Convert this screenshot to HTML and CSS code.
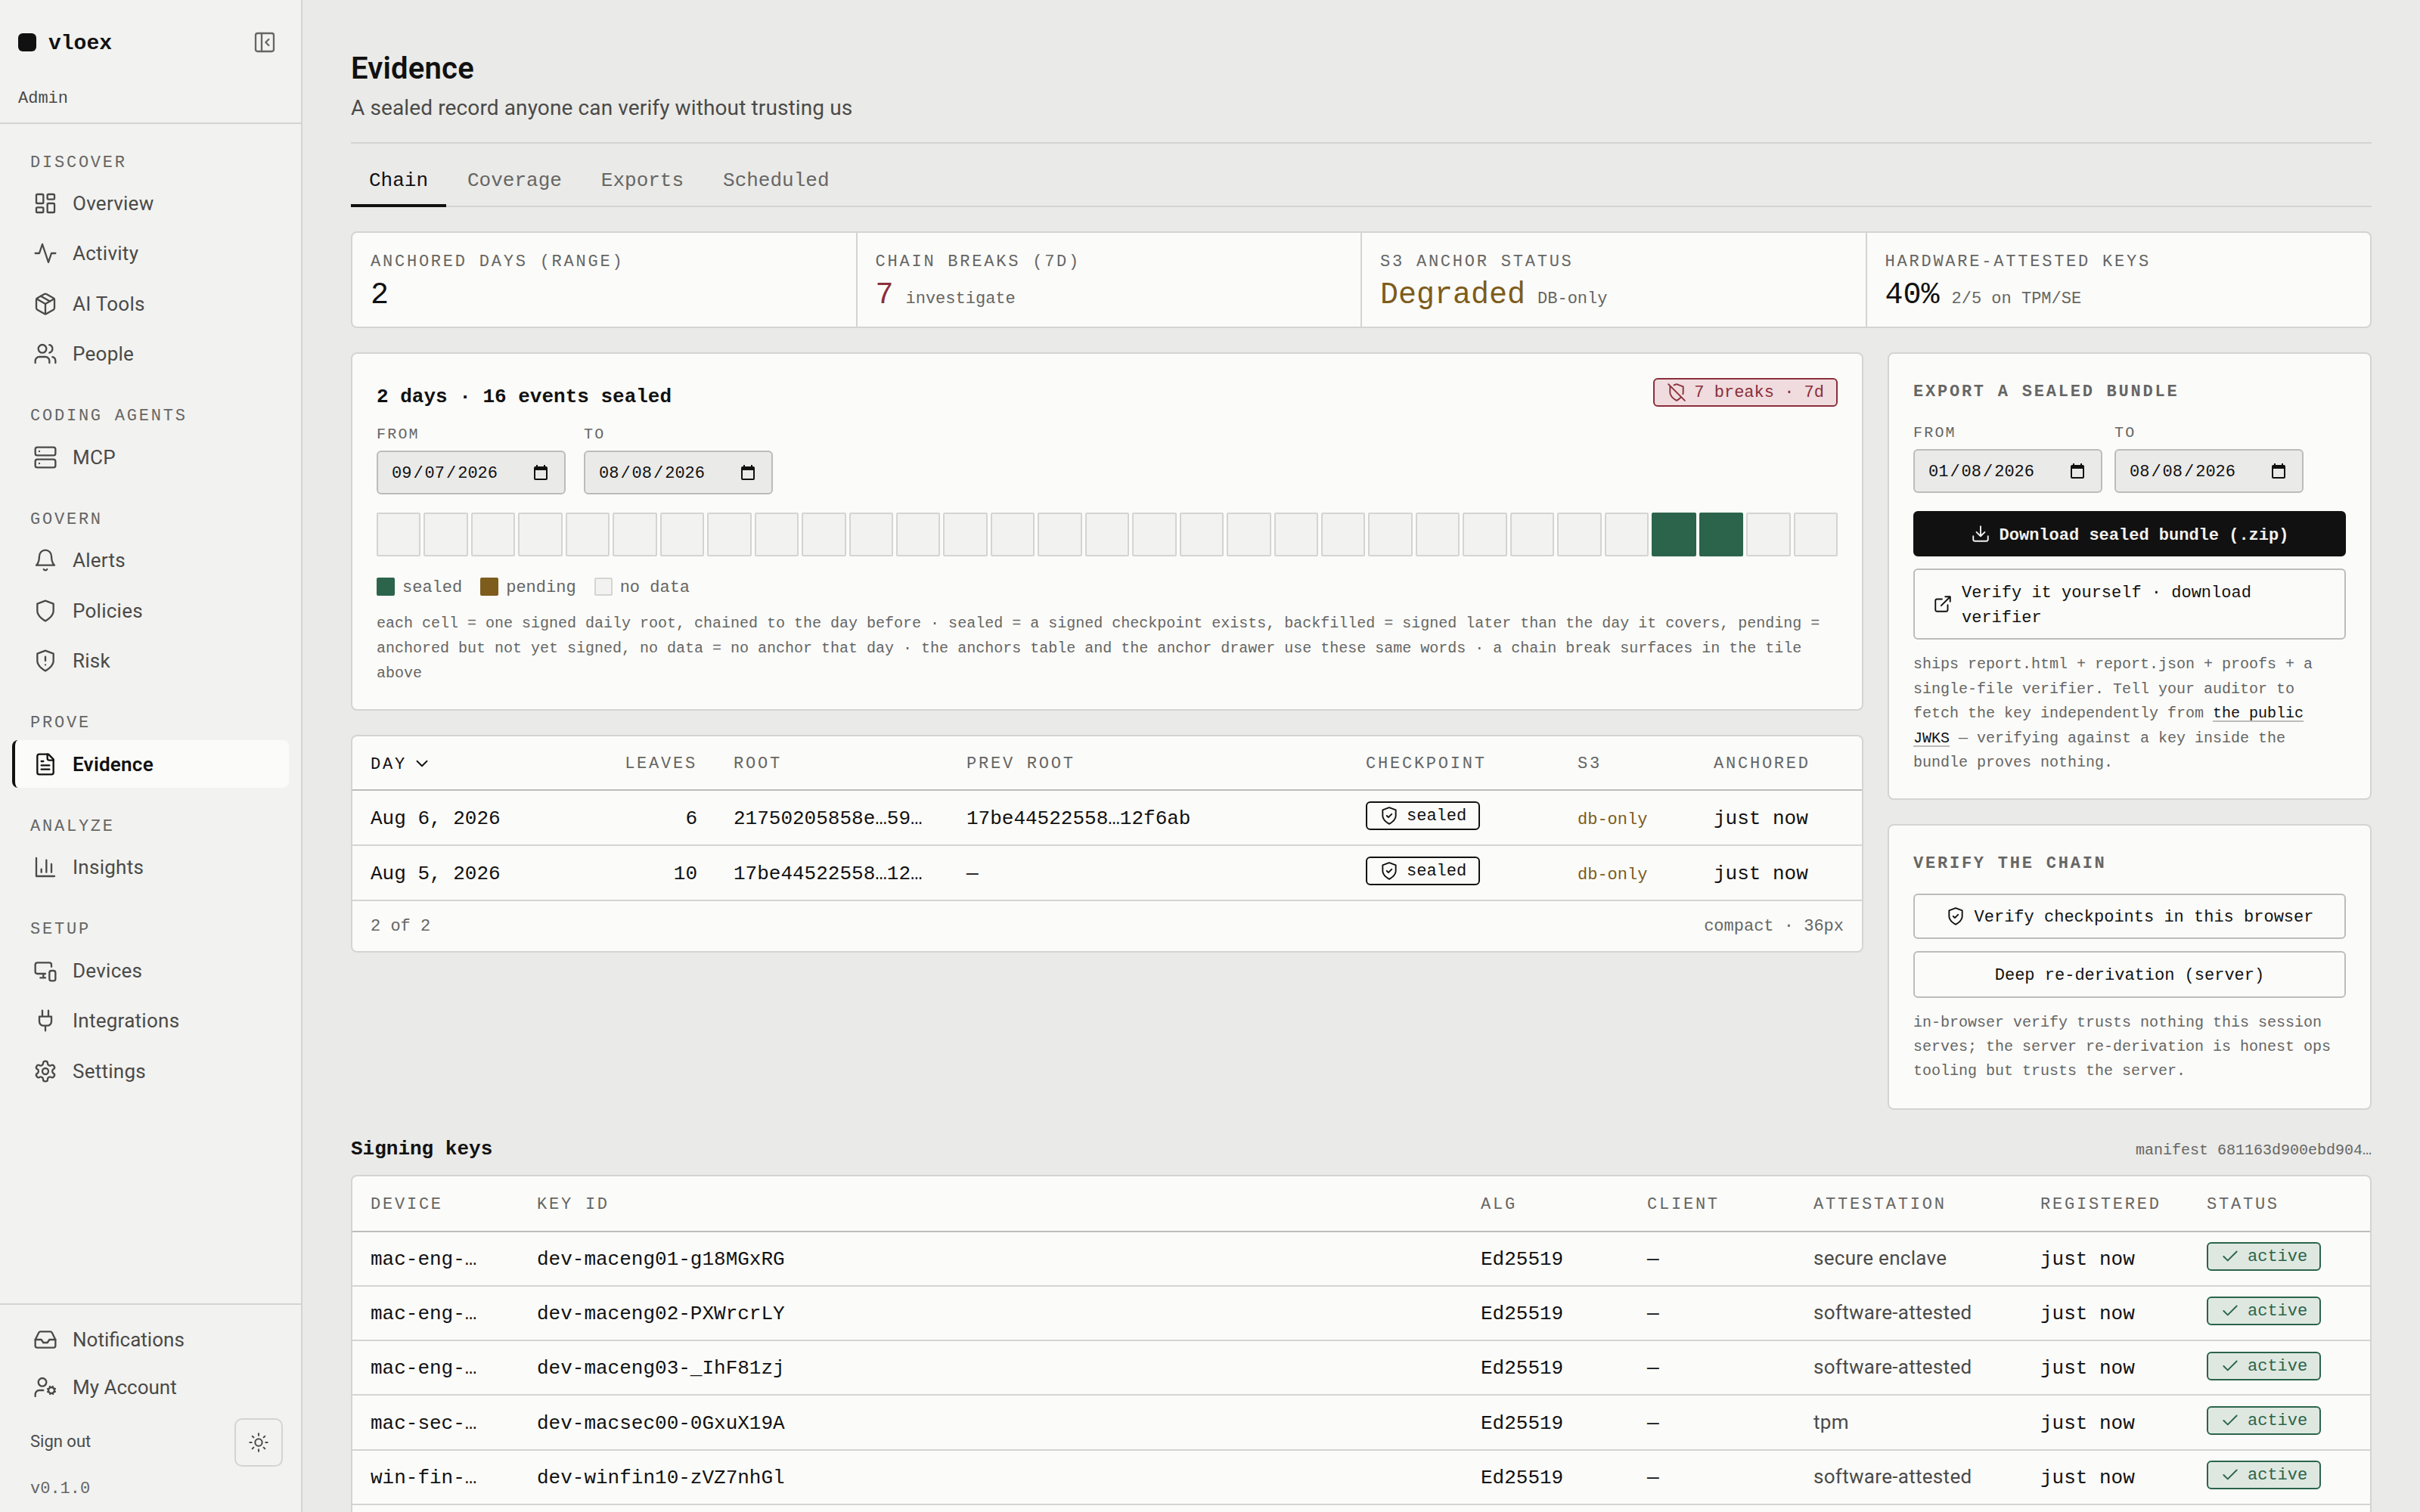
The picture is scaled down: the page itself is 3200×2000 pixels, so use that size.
FILE: index.html
```html
<!DOCTYPE html>
<html lang="en">
  <head>
    <meta charset="UTF-8" />
    <meta name="viewport" content="width=device-width, initial-scale=1.0" />
    <title>Evidence · vloex</title>
    <link rel="stylesheet" href="styles.css">
  </head>
  <body>
    <svg class="sprite" aria-hidden="true">
      <symbol id="i-panel" viewBox="0 0 24 24"><rect x="3" y="3" width="18" height="18" rx="2"/><path d="M9 3v18M16 15l-3-3 3-3"/></symbol>
      <symbol id="i-dashboard" viewBox="0 0 24 24"><rect x="3" y="3" width="7" height="9" rx="1"/><rect x="14" y="3" width="7" height="5" rx="1"/><rect x="14" y="12" width="7" height="9" rx="1"/><rect x="3" y="16" width="7" height="5" rx="1"/></symbol>
      <symbol id="i-activity" viewBox="0 0 24 24"><path d="M22 12h-4l-3 9L9 3l-3 9H2"/></symbol>
      <symbol id="i-package" viewBox="0 0 24 24"><path d="m7.5 4.27 9 5.15"/><path d="M21 8a2 2 0 0 0-1-1.73l-7-4a2 2 0 0 0-2 0l-7 4A2 2 0 0 0 3 8v8a2 2 0 0 0 1 1.73l7 4a2 2 0 0 0 2 0l7-4A2 2 0 0 0 21 16Z"/><path d="m3.3 7 8.7 5 8.7-5M12 22V12"/></symbol>
      <symbol id="i-users" viewBox="0 0 24 24"><path d="M16 21v-2a4 4 0 0 0-4-4H6a4 4 0 0 0-4 4v2"/><circle cx="9" cy="7" r="4"/><path d="M22 21v-2a4 4 0 0 0-3-3.87M16 3.13a4 4 0 0 1 0 7.75"/></symbol>
      <symbol id="i-server" viewBox="0 0 24 24"><rect x="2" y="2" width="20" height="8" rx="2"/><rect x="2" y="14" width="20" height="8" rx="2"/><path d="M6 6h.01M6 18h.01"/></symbol>
      <symbol id="i-bell" viewBox="0 0 24 24"><path d="M6 8a6 6 0 0 1 12 0c0 7 3 9 3 9H3s3-2 3-9M10.3 21a1.94 1.94 0 0 0 3.4 0"/></symbol>
      <symbol id="i-shield" viewBox="0 0 24 24"><path d="M12 22s8-4 8-10V5l-8-3-8 3v7c0 6 8 10 8 10"/></symbol>
      <symbol id="i-shield-alert" viewBox="0 0 24 24"><path d="M12 22s8-4 8-10V5l-8-3-8 3v7c0 6 8 10 8 10M12 8v4M12 16h.01"/></symbol>
      <symbol id="i-shield-check" viewBox="0 0 24 24"><path d="M12 22s8-4 8-10V5l-8-3-8 3v7c0 6 8 10 8 10M9 12l2 2 4-4"/></symbol>
      <symbol id="i-shield-off" viewBox="0 0 24 24"><path d="M19.69 14a6.9 6.9 0 0 0 .31-2V5l-8-3-3.16 1.18M4.73 4.73 4 5v7c0 6 8 10 8 10a20.29 20.29 0 0 0 5.62-4.38M2 2l20 20"/></symbol>
      <symbol id="i-file" viewBox="0 0 24 24"><path d="M15 2H6a2 2 0 0 0-2 2v16a2 2 0 0 0 2 2h12a2 2 0 0 0 2-2V7Z"/><path d="M14 2v4a2 2 0 0 0 2 2h4M10 9H8M16 13H8M16 17H8"/></symbol>
      <symbol id="i-chart" viewBox="0 0 24 24"><path d="M3 3v18h18M18 17V9M13 17V5M8 17v-3"/></symbol>
      <symbol id="i-devices" viewBox="0 0 24 24"><path d="M18 8V6a2 2 0 0 0-2-2H4a2 2 0 0 0-2 2v7a2 2 0 0 0 2 2h8M10 19v-3.96M7 19h5"/><rect x="16" y="12" width="6" height="10" rx="2"/></symbol>
      <symbol id="i-plug" viewBox="0 0 24 24"><path d="M12 22v-5M9 8V2M15 8V2M18 8v5a4 4 0 0 1-4 4h-4a4 4 0 0 1-4-4V8Z"/></symbol>
      <symbol id="i-settings" viewBox="0 0 24 24"><path d="M12.22 2h-.44a2 2 0 0 0-2 2v.18a2 2 0 0 1-1 1.73l-.43.25a2 2 0 0 1-2 0l-.15-.08a2 2 0 0 0-2.73.73l-.22.38a2 2 0 0 0 .73 2.73l.15.1a2 2 0 0 1 1 1.72v.51a2 2 0 0 1-1 1.74l-.15.09a2 2 0 0 0-.73 2.73l.22.38a2 2 0 0 0 2.73.73l.15-.08a2 2 0 0 1 2 0l.43.25a2 2 0 0 1 1 1.73V20a2 2 0 0 0 2 2h.44a2 2 0 0 0 2-2v-.18a2 2 0 0 1 1-1.73l.43-.25a2 2 0 0 1 2 0l.15.08a2 2 0 0 0 2.73-.73l.22-.39a2 2 0 0 0-.73-2.73l-.15-.08a2 2 0 0 1-1-1.74v-.5a2 2 0 0 1 1-1.74l.15-.09a2 2 0 0 0 .73-2.73l-.22-.38a2 2 0 0 0-2.73-.73l-.15.08a2 2 0 0 1-2 0l-.43-.25a2 2 0 0 1-1-1.73V4a2 2 0 0 0-2-2z"/><circle cx="12" cy="12" r="3"/></symbol>
      <symbol id="i-inbox" viewBox="0 0 24 24"><path d="M22 12h-6l-2 3h-4l-2-3H2"/><path d="M5.45 5.11 2 12v6a2 2 0 0 0 2 2h16a2 2 0 0 0 2-2v-6l-3.45-6.89A2 2 0 0 0 16.76 4H7.24a2 2 0 0 0-1.79 1.11z"/></symbol>
      <symbol id="i-user-cog" viewBox="0 0 24 24"><circle cx="18" cy="15" r="3"/><circle cx="9" cy="7" r="4"/><path d="M10 15H6a4 4 0 0 0-4 4v2M21.7 16.4l-.9-.3M15.2 13.9l-.9-.3M16.6 18.7l.3-.9M19.1 12.2l.3-.9M19.6 18.7l-.4-1M16.8 12.3l-.4-1M14.3 16.6l1-.4M20.7 13.8l1-.4"/></symbol>
      <symbol id="i-sun" viewBox="0 0 24 24"><circle cx="12" cy="12" r="4"/><path d="M12 2v2M12 20v2M4.93 4.93l1.41 1.41M17.66 17.66l1.41 1.41M2 12h2M20 12h2M6.34 17.66l-1.41 1.41M19.07 4.93l-1.41 1.41"/></symbol>
      <symbol id="i-download" viewBox="0 0 24 24"><path d="M21 15v4a2 2 0 0 1-2 2H5a2 2 0 0 1-2-2v-4M7 10l5 5 5-5M12 15V3"/></symbol>
      <symbol id="i-external" viewBox="0 0 24 24"><path d="M15 3h6v6M10 14 21 3M18 13v6a2 2 0 0 1-2 2H5a2 2 0 0 1-2-2V8a2 2 0 0 1 2-2h6"/></symbol>
      <symbol id="i-check" viewBox="0 0 24 24"><path d="M20 6 9 17l-5-5"/></symbol>
      <symbol id="i-chevron" viewBox="0 0 24 24"><path d="m6 9 6 6 6-6"/></symbol>
      <symbol id="i-calendar" viewBox="0 0 18 20"><path d="M3 0h2v2h8V0h2v2h1a2 2 0 0 1 2 2v14a2 2 0 0 1-2 2H2a2 2 0 0 1-2-2V4a2 2 0 0 1 2-2h1zM2 7v11h14V7z" fill="#111" fill-rule="evenodd" stroke="none"/></symbol>
    </svg>

    <div class="app">
      <aside class="sidebar">
        <div class="brand">
          <div class="brand-row">
            <span class="logo"></span>
            <span class="brand-name">vloex</span>
            <svg class="icon collapse"><use href="#i-panel"/></svg>
          </div>
          <div class="role">Admin</div>
        </div>

        <nav class="nav">
          <div class="nav-group">
            <h3 class="nav-title">DISCOVER</h3>
            <a class="nav-item"><svg class="icon"><use href="#i-dashboard"/></svg>Overview</a>
            <a class="nav-item"><svg class="icon"><use href="#i-activity"/></svg>Activity</a>
            <a class="nav-item"><svg class="icon"><use href="#i-package"/></svg>AI Tools</a>
            <a class="nav-item"><svg class="icon"><use href="#i-users"/></svg>People</a>
          </div>
          <div class="nav-group">
            <h3 class="nav-title">CODING AGENTS</h3>
            <a class="nav-item"><svg class="icon"><use href="#i-server"/></svg>MCP</a>
          </div>
          <div class="nav-group">
            <h3 class="nav-title">GOVERN</h3>
            <a class="nav-item"><svg class="icon"><use href="#i-bell"/></svg>Alerts</a>
            <a class="nav-item"><svg class="icon"><use href="#i-shield"/></svg>Policies</a>
            <a class="nav-item"><svg class="icon"><use href="#i-shield-alert"/></svg>Risk</a>
          </div>
          <div class="nav-group">
            <h3 class="nav-title">PROVE</h3>
            <a class="nav-item active"><svg class="icon"><use href="#i-file"/></svg>Evidence</a>
          </div>
          <div class="nav-group">
            <h3 class="nav-title">ANALYZE</h3>
            <a class="nav-item"><svg class="icon"><use href="#i-chart"/></svg>Insights</a>
          </div>
          <div class="nav-group">
            <h3 class="nav-title">SETUP</h3>
            <a class="nav-item"><svg class="icon"><use href="#i-devices"/></svg>Devices</a>
            <a class="nav-item"><svg class="icon"><use href="#i-plug"/></svg>Integrations</a>
            <a class="nav-item"><svg class="icon"><use href="#i-settings"/></svg>Settings</a>
          </div>
        </nav>

        <div class="side-footer">
          <a class="nav-item"><svg class="icon"><use href="#i-inbox"/></svg>Notifications</a>
          <a class="nav-item"><svg class="icon"><use href="#i-user-cog"/></svg>My Account</a>
          <div class="signout-row">
            <span class="signout">Sign out</span>
            <button class="theme-btn"><svg class="icon"><use href="#i-sun"/></svg></button>
          </div>
          <div class="version">v0.1.0</div>
        </div>
      </aside>

      <main class="main">
        <header class="page-head">
          <h1>Evidence</h1>
          <p>A sealed record anyone can verify without trusting us</p>
        </header>

        <div class="tabs">
          <a class="tab active">Chain</a>
          <a class="tab">Coverage</a>
          <a class="tab">Exports</a>
          <a class="tab">Scheduled</a>
        </div>

        <section class="stats">
          <div class="stat">
            <div class="stat-label">ANCHORED DAYS (RANGE)</div>
            <div class="stat-line"><span class="stat-value">2</span></div>
          </div>
          <div class="stat">
            <div class="stat-label">CHAIN BREAKS (7D)</div>
            <div class="stat-line"><span class="stat-value danger">7</span><span class="stat-note">investigate</span></div>
          </div>
          <div class="stat">
            <div class="stat-label">S3 ANCHOR STATUS</div>
            <div class="stat-line"><span class="stat-value warn">Degraded</span><span class="stat-note">DB-only</span></div>
          </div>
          <div class="stat">
            <div class="stat-label">HARDWARE-ATTESTED KEYS</div>
            <div class="stat-line"><span class="stat-value">40%</span><span class="stat-note">2/5 on TPM/SE</span></div>
          </div>
        </section>

        <div class="columns">
          <div class="col">
            <section class="card chain">
              <div class="chain-head">
                <h2>2 days · 16 events sealed</h2>
                <span class="badge badge-danger"><svg class="icon"><use href="#i-shield-off"/></svg><span>7 breaks · 7d</span></span>
              </div>
              <div class="dates">
                <div class="field">
                  <label>FROM</label>
                  <div class="date"><span>09</span>/<span>07</span>/<span>2026</span><svg class="cal"><use href="#i-calendar"/></svg></div>
                </div>
                <div class="field">
                  <label>TO</label>
                  <div class="date"><span>08</span>/<span>08</span>/<span>2026</span><svg class="cal"><use href="#i-calendar"/></svg></div>
                </div>
              </div>
              <div class="cells">
                <i></i><i></i><i></i><i></i><i></i><i></i><i></i><i></i><i></i>
                <i></i><i></i><i></i><i></i><i></i><i></i><i></i><i></i><i></i>
                <i></i><i></i><i></i><i></i><i></i><i></i><i></i><i></i><i></i>
                <i class="sealed"></i><i class="sealed"></i><i></i><i></i>
              </div>
              <div class="legend">
                <span class="key"><i class="swatch sealed"></i>sealed</span>
                <span class="key"><i class="swatch pending"></i>pending</span>
                <span class="key"><i class="swatch"></i>no data</span>
              </div>
              <p class="hint">each cell = one signed daily root, chained to the day before · sealed = a signed checkpoint exists, backfilled = signed later than the day it covers, pending = anchored but not yet signed, no data = no anchor that day · the anchors table and the anchor drawer use these same words · a chain break surfaces in the tile above</p>
            </section>

            <section class="card">
              <table class="anchors">
                <colgroup>
                  <col style="width: 300px"><col style="width: 180px"><col style="width: 308px"><col style="width: 528px"><col style="width: 280px"><col style="width: 180px"><col>
                </colgroup>
                <thead>
                  <tr>
                    <th class="sorted">DAY<svg class="icon"><use href="#i-chevron"/></svg></th>
                    <th class="num">LEAVES</th>
                    <th>ROOT</th>
                    <th>PREV ROOT</th>
                    <th>CHECKPOINT</th>
                    <th>S3</th>
                    <th>ANCHORED</th>
                  </tr>
                </thead>
                <tbody>
                  <tr>
                    <td>Aug 6, 2026</td>
                    <td class="num">6</td>
                    <td>21750205858e…59…</td>
                    <td>17be44522558…12f6ab</td>
                    <td><span class="badge"><svg class="icon"><use href="#i-shield-check"/></svg><span>sealed</span></span></td>
                    <td><span class="small warn">db-only</span></td>
                    <td>just now</td>
                  </tr>
                  <tr>
                    <td>Aug 5, 2026</td>
                    <td class="num">10</td>
                    <td>17be44522558…12…</td>
                    <td>—</td>
                    <td><span class="badge"><svg class="icon"><use href="#i-shield-check"/></svg><span>sealed</span></span></td>
                    <td><span class="small warn">db-only</span></td>
                    <td>just now</td>
                  </tr>
                </tbody>
              </table>
              <div class="table-foot"><span>2 of 2</span><span>compact · 36px</span></div>
            </section>
          </div>

          <div class="col">
            <section class="card panel export">
              <h2 class="panel-title">EXPORT A SEALED BUNDLE</h2>
              <div class="dates">
                <div class="field">
                  <label>FROM</label>
                  <div class="date"><span>01</span>/<span>08</span>/<span>2026</span><svg class="cal"><use href="#i-calendar"/></svg></div>
                </div>
                <div class="field">
                  <label>TO</label>
                  <div class="date"><span>08</span>/<span>08</span>/<span>2026</span><svg class="cal"><use href="#i-calendar"/></svg></div>
                </div>
              </div>
              <button class="btn primary"><svg class="icon"><use href="#i-download"/></svg><span>Download sealed bundle (.zip)</span></button>
              <button class="btn"><svg class="icon"><use href="#i-external"/></svg><span>Verify it yourself · download verifier</span></button>
              <p class="hint">ships report.html + report.json + proofs + a single-file verifier. Tell your auditor to fetch the key independently from <a>the public</a> <a>JWKS</a> — verifying against a key inside the bundle proves nothing.</p>
            </section>

            <section class="card panel verify">
              <h2 class="panel-title">VERIFY THE CHAIN</h2>
              <button class="btn"><svg class="icon"><use href="#i-shield-check"/></svg><span>Verify checkpoints in this browser</span></button>
              <button class="btn"><span>Deep re-derivation (server)</span></button>
              <p class="hint">in-browser verify trusts nothing this session serves; the server re-derivation is honest ops tooling but trusts the server.</p>
            </section>
          </div>
        </div>

        <div class="section-head">
          <h2>Signing keys</h2>
          <span>manifest 681163d900ebd904…</span>
        </div>

        <section class="card">
          <table class="keys">
            <colgroup>
              <col style="width: 220px"><col><col style="width: 220px"><col style="width: 220px"><col style="width: 300px"><col style="width: 220px"><col style="width: 240px">
            </colgroup>
            <thead>
              <tr>
                <th>DEVICE</th>
                <th>KEY ID</th>
                <th>ALG</th>
                <th>CLIENT</th>
                <th>ATTESTATION</th>
                <th>REGISTERED</th>
                <th>STATUS</th>
              </tr>
            </thead>
            <tbody>
              <tr>
                <td>mac-eng-…</td><td>dev-maceng01-g18MGxRG</td><td>Ed25519</td><td>—</td>
                <td class="sans">secure enclave</td><td>just now</td>
                <td><span class="badge badge-ok"><svg class="icon"><use href="#i-check"/></svg><span>active</span></span></td>
              </tr>
              <tr>
                <td>mac-eng-…</td><td>dev-maceng02-PXWrcrLY</td><td>Ed25519</td><td>—</td>
                <td class="sans">software-attested</td><td>just now</td>
                <td><span class="badge badge-ok"><svg class="icon"><use href="#i-check"/></svg><span>active</span></span></td>
              </tr>
              <tr>
                <td>mac-eng-…</td><td>dev-maceng03-_IhF81zj</td><td>Ed25519</td><td>—</td>
                <td class="sans">software-attested</td><td>just now</td>
                <td><span class="badge badge-ok"><svg class="icon"><use href="#i-check"/></svg><span>active</span></span></td>
              </tr>
              <tr>
                <td>mac-sec-…</td><td>dev-macsec00-0GxuX19A</td><td>Ed25519</td><td>—</td>
                <td class="sans">tpm</td><td>just now</td>
                <td><span class="badge badge-ok"><svg class="icon"><use href="#i-check"/></svg><span>active</span></span></td>
              </tr>
              <tr>
                <td>win-fin-…</td><td>dev-winfin10-zVZ7nhGl</td><td>Ed25519</td><td>—</td>
                <td class="sans">software-attested</td><td>just now</td>
                <td><span class="badge badge-ok"><svg class="icon"><use href="#i-check"/></svg><span>active</span></span></td>
              </tr>
            </tbody>
          </table>
          <div class="table-foot"></div>
        </section>
      </main>
    </div>
  </body>
</html>
```

FILE: styles.css
```css
:root {
  --bg: #eaeae8;
  --side: #f2f2f0;
  --card: #fbfbf9;
  --line: #d4d4d1;
  --line-strong: #bcbcba;
  --ink: #111111;
  --mid: #4a4a48;
  --muted: #666664;
  --green: #2b644b;
  --brown: #7d5c1c;
  --red: #8a2f3b;
  --caps: 0.126em;
  --mono: "Liberation Mono", monospace;
  --sans: Roboto, "Liberation Sans", sans-serif;
}
* {
  box-sizing: border-box;
}
body {
  margin: 0;
  background: var(--bg);
  color: var(--ink);
  font-family: var(--mono);
  font-size: 26px;
}
h1,
h2,
h3,
p {
  margin: 0;
}
button {
  font: inherit;
  color: inherit;
}
.sprite {
  display: none;
}
.icon {
  width: 26px;
  height: 26px;
  flex: none;
  fill: none;
  stroke: currentColor;
  stroke-width: 1.75;
  stroke-linecap: round;
  stroke-linejoin: round;
}
.app {
  display: flex;
  height: 2000px;
  overflow: hidden;
}

/* sidebar */
.sidebar {
  width: 400px;
  flex: none;
  display: flex;
  flex-direction: column;
  background: var(--side);
  border-right: 2px solid var(--line);
}
.brand {
  padding: 40px 24px 15px;
  border-bottom: 2px solid var(--line);
}
.brand-row {
  display: flex;
  align-items: center;
  gap: 16px;
  height: 32px;
}
.logo {
  width: 24px;
  height: 24px;
  border-radius: 6px;
  background: var(--ink);
}
.brand-name {
  flex: 1;
  padding-top: 4px;
  font-size: 28px;
  font-weight: 700;
  line-height: 32px;
}
.brand .collapse {
  width: 32px;
  height: 32px;
  margin-right: 8px;
  color: var(--muted);
}
.role {
  margin-top: 43px;
  font-size: 22px;
  line-height: 32px;
  color: var(--mid);
}
.nav {
  padding: 33.5px 16px 0;
}
.nav-group {
  display: flex;
  flex-direction: column;
  gap: 4.1px;
  margin-bottom: 34px;
}
.nav-title {
  padding-left: 24px;
  font-size: 22px;
  font-weight: 400;
  line-height: 36px;
  letter-spacing: var(--caps);
  color: var(--muted);
}
.nav-item {
  display: flex;
  align-items: center;
  gap: 20px;
  height: 62.4px;
  padding-left: 24px;
  border-left: 4px solid transparent;
  border-radius: 8px;
  font-family: var(--sans);
  font-size: 26px;
  letter-spacing: 0.01em;
  color: var(--mid);
}
.nav-item .icon {
  width: 32px;
  height: 32px;
}
.nav-item.active {
  border-left-color: var(--ink);
  background: var(--card);
  color: var(--ink);
  font-weight: 600;
}
.side-footer {
  margin-top: auto;
  padding: 15px 24px 14px 16px;
  border-top: 2px solid var(--line);
}
.side-footer .nav-item {
  letter-spacing: 0;
}
.signout-row {
  display: flex;
  align-items: center;
  justify-content: space-between;
  margin-top: 10px;
  padding-left: 24px;
}
.signout {
  padding-bottom: 3px;
  font-family: var(--sans);
  font-size: 22px;
  color: var(--mid);
}
.theme-btn {
  display: flex;
  align-items: center;
  justify-content: center;
  width: 64px;
  height: 64px;
  padding: 0;
  border: 2px solid var(--line);
  border-radius: 10px;
  background: none;
  color: var(--mid);
}
.theme-btn .icon {
  width: 28px;
  height: 28px;
}
.version {
  margin-top: 14px;
  padding-left: 24px;
  font-size: 22px;
  line-height: 32px;
  color: var(--muted);
}

/* page */
.main {
  flex: 1;
  min-width: 0;
  padding: 65px 64px 0;
}
.page-head {
  padding-bottom: 24px;
  border-bottom: 2px solid var(--line);
  font-family: var(--sans);
}
.page-head h1 {
  font-size: 40px;
  font-weight: 600;
  line-height: 52px;
  letter-spacing: 0.005em;
}
.page-head p {
  margin-top: 5px;
  font-size: 28px;
  line-height: 42px;
  letter-spacing: 0.12px;
  color: var(--mid);
}
.tabs {
  display: flex;
  gap: 4px;
  margin-top: 18px;
  border-bottom: 2px solid var(--line);
}
.tab {
  margin-bottom: -2px;
  padding: 0 24px;
  border-bottom: 4px solid transparent;
  line-height: 62px;
  color: var(--muted);
}
.tab.active {
  border-bottom-color: var(--ink);
  color: var(--ink);
}
.stats {
  display: grid;
  grid-template-columns: repeat(4, 1fr);
  gap: 2px;
  margin-top: 32px;
  border: 2px solid var(--line);
  border-radius: 8px;
  background: var(--line);
  overflow: hidden;
}
.stat {
  padding: 22px 24px 13px;
  background: var(--card);
}
.stat-label {
  font-size: 22px;
  line-height: 33px;
  letter-spacing: var(--caps);
  color: var(--muted);
}
.stat-line {
  display: flex;
  align-items: baseline;
  gap: 16px;
}
.stat-value {
  font-size: 40px;
  line-height: 56px;
}
.stat-note {
  font-size: 22px;
  line-height: 32px;
  color: var(--muted);
}
.danger {
  color: var(--red);
}
.warn {
  color: var(--brown);
}

/* cards */
.columns {
  display: grid;
  grid-template-columns: 2000px 640px;
  gap: 32px;
  margin-top: 32px;
}
.col {
  display: flex;
  flex-direction: column;
  align-items: stretch;
  gap: 32px;
}
.card {
  border: 2px solid var(--line);
  border-radius: 8px;
  background: var(--card);
}
.chain {
  padding: 32px 32px 31px;
}
.chain-head {
  display: flex;
  align-items: flex-start;
  justify-content: space-between;
}
.chain-head h2 {
  margin-top: 5px;
  font-size: 26px;
  line-height: 40px;
}
.badge {
  display: flex;
  align-items: center;
  gap: 10px;
  width: fit-content;
  height: 38px;
  padding: 0 16px;
  border: 2px solid var(--ink);
  border-radius: 6px;
  font-size: 22px;
  line-height: 32px;
}
.badge span {
  padding-top: 2px;
}
.badge-danger {
  border-color: var(--red);
  background: #f0dcde;
  color: var(--red);
}
.badge-ok {
  border-color: var(--green);
  background: #dee8e1;
  color: var(--green);
}
.dates {
  display: flex;
  gap: 24px;
}
.chain .dates {
  margin-top: 15px;
}
.field label {
  display: block;
  margin-bottom: 6px;
  font-size: 20px;
  line-height: 30px;
  letter-spacing: 0.11em;
  color: var(--muted);
}
.date {
  display: flex;
  align-items: center;
  width: 250px;
  height: 58px;
  padding: 2px 22px 0 16px;
  border: 2px solid var(--line-strong);
  border-radius: 6px;
  background: var(--bg);
  font-size: 22px;
}
.date span {
  padding: 0 2px;
}
.cal {
  width: 18px;
  height: 20px;
  margin: 0 0 2px auto;
}
.cells {
  display: grid;
  grid-template-columns: repeat(31, 1fr);
  gap: 4px;
  margin-top: 24px;
}
.cells i {
  height: 58px;
  border: 2px solid var(--line);
  border-radius: 2px;
  background: var(--side);
}
.cells .sealed,
.swatch.sealed {
  border-color: var(--green);
  background: var(--green);
}
.swatch.pending {
  border-color: var(--brown);
  background: var(--brown);
}
.legend {
  display: flex;
  gap: 24px;
  margin-top: 28px;
  font-size: 22px;
  line-height: 28px;
  color: var(--muted);
}
.key {
  display: flex;
  gap: 10px;
}
.swatch {
  width: 24px;
  height: 24px;
  border: 2px solid var(--line);
  border-radius: 2px;
  background: var(--side);
}
.hint {
  font-size: 20px;
  line-height: 33px;
  color: var(--muted);
}
.chain .hint {
  margin-top: 16px;
}

/* tables */
table {
  width: 100%;
  table-layout: fixed;
  border-collapse: separate;
  border-spacing: 0;
}
th,
td {
  padding: 2px 24px 0;
  border-bottom: 2px solid var(--line);
  text-align: left;
  vertical-align: middle;
  white-space: nowrap;
}
th {
  height: 72px;
  border-bottom-color: var(--line-strong);
  font-size: 22px;
  font-weight: 400;
  letter-spacing: var(--caps);
  color: var(--muted);
}
td {
  height: 73px;
}
th.sorted {
  color: var(--ink);
}
th .icon {
  margin-left: 7px;
  vertical-align: -6px;
}
.num {
  text-align: right;
}
td .badge {
  margin-bottom: 7px;
}
.small {
  font-size: 22px;
}
.sans {
  padding-bottom: 4px;
  font-family: var(--sans);
  letter-spacing: 0.3px;
  color: var(--mid);
}
.table-foot {
  display: flex;
  justify-content: space-between;
  height: 66px;
  padding: 0 24px;
  font-size: 22px;
  line-height: 68px;
  color: var(--muted);
}
.keys th {
  height: 74px;
  padding-top: 4px;
}
.keys td {
  height: 72.3px;
}

/* right column */
.panel {
  padding: 32px 32px 30px;
}
.panel-title {
  margin-bottom: 21px;
  font-size: 22px;
  line-height: 37px;
  letter-spacing: var(--caps);
  color: var(--muted);
}
.panel .dates {
  gap: 16px;
  margin-bottom: 24px;
}
.btn {
  display: flex;
  align-items: center;
  justify-content: center;
  gap: 12px;
  width: 100%;
  min-height: 60px;
  margin-bottom: 16px;
  padding: 8px 24px;
  border: 2px solid var(--line-strong);
  border-radius: 6px;
  background: var(--card);
  font-size: 22px;
  line-height: 33px;
  text-align: left;
}
.btn span {
  padding-top: 4px;
}
.btn.primary {
  border-color: var(--ink);
  background: var(--ink);
  color: var(--side);
  font-weight: 700;
}
.export .btn:not(.primary) {
  height: 94px;
}
.panel .hint {
  margin-top: 17px;
  line-height: 32.5px;
}
.hint a {
  color: var(--ink);
  text-decoration: underline 2px var(--line-strong);
  text-underline-offset: 4px;
  text-decoration-skip-ink: none;
}
.verify {
  padding-bottom: 33px;
}
.verify .btn + .btn {
  height: 62px;
}
.verify .hint {
  line-height: 32px;
}
.section-head {
  display: flex;
  align-items: baseline;
  justify-content: space-between;
  margin: 32px 0 14px;
}
.section-head h2 {
  font-size: 26px;
  line-height: 40px;
}
.section-head span {
  font-size: 20px;
  color: var(--muted);
}
```
